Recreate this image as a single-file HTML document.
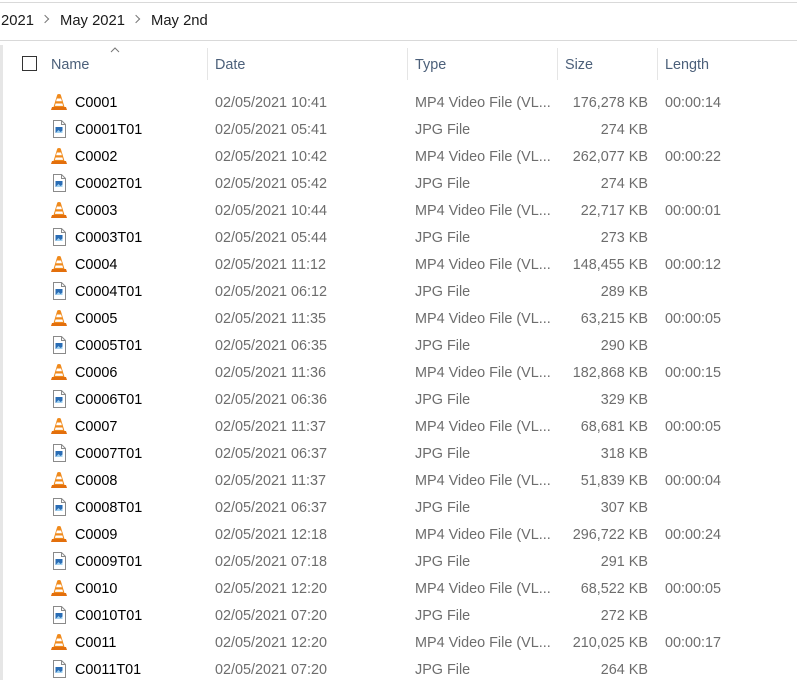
<!DOCTYPE html>
<html><head><meta charset="utf-8"><style>
*{margin:0;padding:0;box-sizing:border-box}
body{width:797px;height:680px;overflow:hidden;background:#fff;font-family:"Liberation Sans",sans-serif;font-size:14.4px;position:relative}
.hl{position:absolute;left:0;width:797px;height:1px;background:#d9d9d9}
.bc{position:absolute;top:13px;color:#1a1a1a;font-size:14.8px}
.chev{position:absolute;top:16px;width:6px;height:6px;border-right:1.3px solid #777;border-top:1.3px solid #777;transform:rotate(45deg)}
.strip{position:absolute;left:0;top:45px;width:3px;height:635px;background:#e6e6e6}
.hd{position:absolute;top:57px;color:#4c607a;font-size:14.4px}
.sep{position:absolute;top:48px;width:1px;height:32px;background:#e5e5e5}
.cb{position:absolute;left:22px;top:56px;width:15px;height:15px;border:1px solid #333}
.r{position:absolute;left:0;width:797px;height:27px}
.r span{position:absolute;top:6px;color:#6d6d6d;white-space:nowrap}
.r .n{left:75px;color:#000}
.r .d{left:215px}.r .t{left:415px}.r .s{right:149px}.r .l{left:665px}
.r svg{position:absolute;left:51px;top:4px}
</style></head><body>
<div class="hl" style="top:2px"></div>
<div class="hl" style="top:40px"></div>
<div class="bc" style="left:1px">2021</div>
<div class="chev" style="left:42px"></div>
<div class="bc" style="left:60px">May 2021</div>
<div class="chev" style="left:133px"></div>
<div class="bc" style="left:151px">May 2nd</div>
<div class="strip"></div>
<div class="cb"></div>
<svg style="position:absolute;left:110px;top:47px" width="10" height="6"><path d="M1 5L5 1L9 5" fill="none" stroke="#777" stroke-width="1"/></svg>
<div class="hd" style="left:51px">Name</div>
<div class="sep" style="left:207px"></div><div class="hd" style="left:215px">Date</div>
<div class="sep" style="left:407px"></div><div class="hd" style="left:415px">Type</div>
<div class="sep" style="left:557px"></div><div class="hd" style="left:565px">Size</div>
<div class="sep" style="left:657px"></div><div class="hd" style="left:665px">Length</div>

<svg width="0" height="0" style="position:absolute"><defs>
<symbol id="v" viewBox="0 0 16 18"><path d="M6.3 1.5Q8 .5 9.7 1.5L13.5 14H2.5Z" fill="#f08a1c"/><path d="M5.9 5.5h4.2l.8 2.8H5.1z" fill="#fff"/><path d="M4.6 10.5h6.8l.7 2.4H3.9z" fill="#fff"/><path d="M1 14h14l1 3H0z" fill="#e36f0c"/></symbol>
<symbol id="j" viewBox="0 0 16 18"><path d="M2.5 .5h8l4 4v13h-12z" fill="#fff" stroke="#8a8a8a"/><path d="M10.5 .5v4h4" fill="none" stroke="#8a8a8a"/><rect x="4.5" y="7" width="7" height="6" fill="#2a6db5"/><path d="M4.5 13l3-3 2 2 2-1.5V13z" fill="#9fd0f0"/></symbol>
</defs></svg>

<div class="r" style="top:89px"><svg width="16" height="18"><use href="#v"/></svg><span class="n">C0001</span><span class="d">02/05/2021 10:41</span><span class="t">MP4 Video File (VL...</span><span class="s">176,278 KB</span><span class="l">00:00:14</span></div>
<div class="r" style="top:116px"><svg width="16" height="18"><use href="#j"/></svg><span class="n">C0001T01</span><span class="d">02/05/2021 05:41</span><span class="t">JPG File</span><span class="s">274 KB</span></div>
<div class="r" style="top:143px"><svg width="16" height="18"><use href="#v"/></svg><span class="n">C0002</span><span class="d">02/05/2021 10:42</span><span class="t">MP4 Video File (VL...</span><span class="s">262,077 KB</span><span class="l">00:00:22</span></div>
<div class="r" style="top:170px"><svg width="16" height="18"><use href="#j"/></svg><span class="n">C0002T01</span><span class="d">02/05/2021 05:42</span><span class="t">JPG File</span><span class="s">274 KB</span></div>
<div class="r" style="top:197px"><svg width="16" height="18"><use href="#v"/></svg><span class="n">C0003</span><span class="d">02/05/2021 10:44</span><span class="t">MP4 Video File (VL...</span><span class="s">22,717 KB</span><span class="l">00:00:01</span></div>
<div class="r" style="top:224px"><svg width="16" height="18"><use href="#j"/></svg><span class="n">C0003T01</span><span class="d">02/05/2021 05:44</span><span class="t">JPG File</span><span class="s">273 KB</span></div>
<div class="r" style="top:251px"><svg width="16" height="18"><use href="#v"/></svg><span class="n">C0004</span><span class="d">02/05/2021 11:12</span><span class="t">MP4 Video File (VL...</span><span class="s">148,455 KB</span><span class="l">00:00:12</span></div>
<div class="r" style="top:278px"><svg width="16" height="18"><use href="#j"/></svg><span class="n">C0004T01</span><span class="d">02/05/2021 06:12</span><span class="t">JPG File</span><span class="s">289 KB</span></div>
<div class="r" style="top:305px"><svg width="16" height="18"><use href="#v"/></svg><span class="n">C0005</span><span class="d">02/05/2021 11:35</span><span class="t">MP4 Video File (VL...</span><span class="s">63,215 KB</span><span class="l">00:00:05</span></div>
<div class="r" style="top:332px"><svg width="16" height="18"><use href="#j"/></svg><span class="n">C0005T01</span><span class="d">02/05/2021 06:35</span><span class="t">JPG File</span><span class="s">290 KB</span></div>
<div class="r" style="top:359px"><svg width="16" height="18"><use href="#v"/></svg><span class="n">C0006</span><span class="d">02/05/2021 11:36</span><span class="t">MP4 Video File (VL...</span><span class="s">182,868 KB</span><span class="l">00:00:15</span></div>
<div class="r" style="top:386px"><svg width="16" height="18"><use href="#j"/></svg><span class="n">C0006T01</span><span class="d">02/05/2021 06:36</span><span class="t">JPG File</span><span class="s">329 KB</span></div>
<div class="r" style="top:413px"><svg width="16" height="18"><use href="#v"/></svg><span class="n">C0007</span><span class="d">02/05/2021 11:37</span><span class="t">MP4 Video File (VL...</span><span class="s">68,681 KB</span><span class="l">00:00:05</span></div>
<div class="r" style="top:440px"><svg width="16" height="18"><use href="#j"/></svg><span class="n">C0007T01</span><span class="d">02/05/2021 06:37</span><span class="t">JPG File</span><span class="s">318 KB</span></div>
<div class="r" style="top:467px"><svg width="16" height="18"><use href="#v"/></svg><span class="n">C0008</span><span class="d">02/05/2021 11:37</span><span class="t">MP4 Video File (VL...</span><span class="s">51,839 KB</span><span class="l">00:00:04</span></div>
<div class="r" style="top:494px"><svg width="16" height="18"><use href="#j"/></svg><span class="n">C0008T01</span><span class="d">02/05/2021 06:37</span><span class="t">JPG File</span><span class="s">307 KB</span></div>
<div class="r" style="top:521px"><svg width="16" height="18"><use href="#v"/></svg><span class="n">C0009</span><span class="d">02/05/2021 12:18</span><span class="t">MP4 Video File (VL...</span><span class="s">296,722 KB</span><span class="l">00:00:24</span></div>
<div class="r" style="top:548px"><svg width="16" height="18"><use href="#j"/></svg><span class="n">C0009T01</span><span class="d">02/05/2021 07:18</span><span class="t">JPG File</span><span class="s">291 KB</span></div>
<div class="r" style="top:575px"><svg width="16" height="18"><use href="#v"/></svg><span class="n">C0010</span><span class="d">02/05/2021 12:20</span><span class="t">MP4 Video File (VL...</span><span class="s">68,522 KB</span><span class="l">00:00:05</span></div>
<div class="r" style="top:602px"><svg width="16" height="18"><use href="#j"/></svg><span class="n">C0010T01</span><span class="d">02/05/2021 07:20</span><span class="t">JPG File</span><span class="s">272 KB</span></div>
<div class="r" style="top:629px"><svg width="16" height="18"><use href="#v"/></svg><span class="n">C0011</span><span class="d">02/05/2021 12:20</span><span class="t">MP4 Video File (VL...</span><span class="s">210,025 KB</span><span class="l">00:00:17</span></div>
<div class="r" style="top:656px"><svg width="16" height="18"><use href="#j"/></svg><span class="n">C0011T01</span><span class="d">02/05/2021 07:20</span><span class="t">JPG File</span><span class="s">264 KB</span></div>
</body></html>
